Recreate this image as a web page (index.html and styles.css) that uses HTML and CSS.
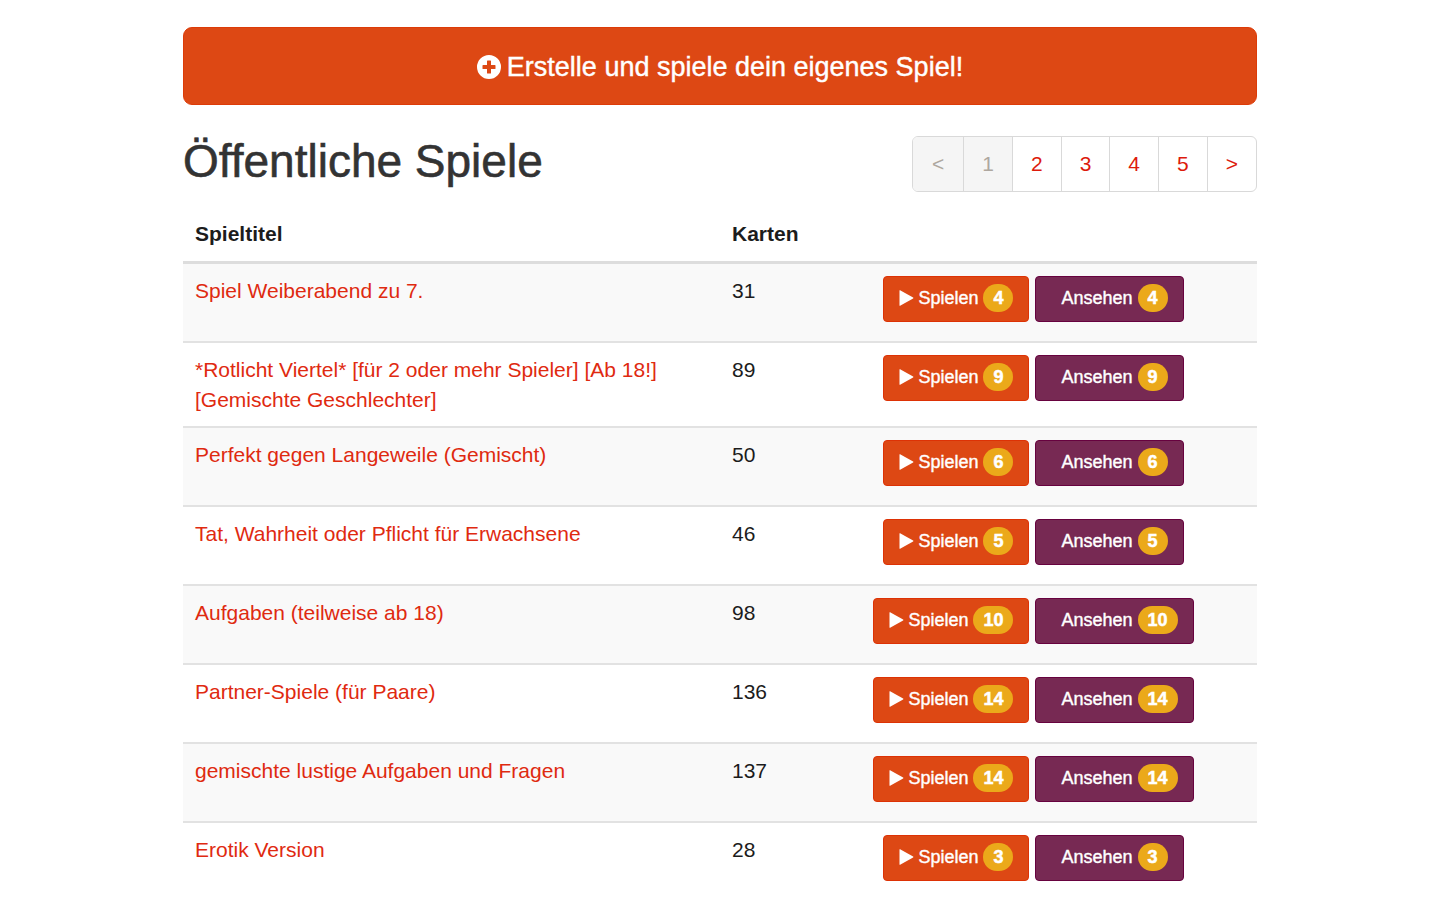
FILE: index.html
```
<!DOCTYPE html>
<html lang="de">
<head>
<meta charset="utf-8">
<meta name="viewport" content="width=device-width, initial-scale=1">
<title>Öffentliche Spiele</title>
<link rel="stylesheet" href="styles.css">
</head>
<body>
<main class="container">
  <button type="button" class="create"><svg class="create-icon" viewBox="0 0 24 24" aria-hidden="true"><path fill="currentColor" fill-rule="evenodd" d="M12 0a12 12 0 1 0 0 24a12 12 0 1 0 0-24zM10.6 5.500h2.800q.6 0 .6.6V10h3.900q.6 0 .6.6v2.800q0 .6-.6.6H14v3.900q0 .6-.6.6h-2.800q-.6 0-.6-.6V14H6.100q-.6 0-.6-.6v-2.800q0-.6.6-.6H10V6.100q0-.6.6-.6z"/></svg>Erstelle und spiele dein eigenes Spiel!</button>
  <header class="heading">
    <h1 class="title">Öffentliche Spiele</h1>
    <nav aria-label="Seiten">
      <ul class="pagination">
        <li class="page disabled"><span class="page-link">&lt;</span></li>
        <li class="page disabled"><span class="page-link" aria-current="page">1</span></li>
        <li class="page"><a class="page-link" href="#2">2</a></li>
        <li class="page"><a class="page-link" href="#3">3</a></li>
        <li class="page"><a class="page-link" href="#4">4</a></li>
        <li class="page"><a class="page-link" href="#5">5</a></li>
        <li class="page"><a class="page-link" href="#next">&gt;</a></li>
      </ul>
    </nav>
  </header>
  <table class="games">
    <thead>
      <tr><th class="col-title" scope="col">Spieltitel</th><th class="col-cards" scope="col">Karten</th><td class="col-actions"></td></tr>
    </thead>
    <tbody id="games"></tbody>
  </table>
</main>
<template id="row">
  <tr>
    <td><a class="game-link" href="#spiel"></a></td>
    <td class="cards"></td>
    <td>
      <div class="actions">
        <button type="button" class="btn play"><svg class="play-icon" viewBox="0 0 14 16" aria-hidden="true"><path fill="currentColor" d="M0 .6Q0 0 .6.300L13.600 7.500Q14.300 8 13.600 8.500L.6 15.700Q0 16 0 15.400z"/></svg><span class="label">Spielen</span><span class="badge"></span></button>
        <button type="button" class="btn view"><span class="label">Ansehen</span><span class="badge"></span></button>
      </div>
    </td>
  </tr>
</template>
<script src="games.js"></script>
</body>
</html>
```
FILE: styles.css
```
* { box-sizing: border-box; }

body {
  margin: 0;
  background: #fff;
  color: #1c1c1c;
  font: 21px/30px "Liberation Sans", Arial, sans-serif;
}

.container {
  width: 100%;
  max-width: 1074px;
  margin: 0 auto;
  padding-top: 27px;
}

.create {
  display: flex;
  align-items: center;
  justify-content: center;
  gap: 6px;
  width: 100%;
  padding: 22px 20px 20px;
  border: 1px solid #dd3b08;
  border-radius: 9px;
  background: #dd4814;
  color: #fff;
  font: 27px/34px "Liberation Sans", Arial, sans-serif;
  -webkit-text-stroke: 0.4px currentColor;
}
.create-icon { width: 24px; height: 24px; }

.heading {
  display: flex;
  justify-content: space-between;
  align-items: flex-start;
  padding: 31px 0 15px;
}
.title {
  margin: 0;
  color: #333;
  font-size: 46px;
  font-weight: 400;
  line-height: 50px;
  -webkit-text-stroke: 0.6px currentColor;
}

.pagination {
  display: flex;
  margin: 0;
  padding: 0;
  list-style: none;
  border: 1px solid #d9d9d9;
  border-radius: 6px;
  overflow: hidden;
}
.page + .page { border-left: 1px solid #d9d9d9; }
.page-link {
  display: block;
  padding: 12px 18px;
  color: #dd1a0c;
  text-decoration: none;
}
.page:first-child .page-link { padding: 12px 19px; }
.disabled .page-link { background: #f5f5f5; color: #aea79f; }

.games {
  width: 100%;
  table-layout: fixed;
  border-collapse: separate;
  border-spacing: 0;
}
.games th, .games td {
  padding: 12px 12px 11px;
  text-align: left;
  vertical-align: top;
}
.games thead th, .games thead td {
  padding-bottom: 12px;
  border-bottom: 3px solid #dddddd;
}
.col-title { width: 50%; }
.col-cards { width: 90px; }
.games tbody tr:nth-child(odd) { background: #f9f9f9; }
.games tbody tr + tr td { border-top: 2px solid #e2e2e2; }

.game-link { color: #df2a10; text-decoration: none; }

.actions {
  display: flex;
  justify-content: center;
  gap: 6px;
  padding-bottom: 8px;
}
.btn {
  display: flex;
  align-items: center;
  padding: 7px 15px 9px;
  border: 1px solid;
  border-radius: 4px;
  color: #fff;
  font: 18px/28px "Liberation Sans", Arial, sans-serif;
}
.label { -webkit-text-stroke: 0.4px currentColor; }
.play { border-color: #dd3205; background: #dd4814; }
.view { padding-left: 25px; border-color: #67023f; background: #772953; }
.play-icon { width: 15px; height: 16px; margin-right: 4px; }
.badge {
  margin-left: 5px;
  padding: 0 10px;
  border-radius: 14px;
  background: #eba91a;
  font-weight: 700;
  -webkit-text-stroke: 0.5px currentColor;
}
```
FILE: games.js
```
const games = [
  ["Spiel Weiberabend zu 7.", 31, 4],
  ["*Rotlicht Viertel* [für 2 oder mehr Spieler] [Ab 18!] [Gemischte Geschlechter]", 89, 9],
  ["Perfekt gegen Langeweile (Gemischt)", 50, 6],
  ["Tat, Wahrheit oder Pflicht für Erwachsene", 46, 5],
  ["Aufgaben (teilweise ab 18)", 98, 10],
  ["Partner-Spiele (für Paare)", 136, 14],
  ["gemischte lustige Aufgaben und Fragen", 137, 14],
  ["Erotik Version", 28, 3]
];

const template = document.getElementById("row");
const body = document.getElementById("games");

for (const [title, cards, count] of games) {
  const row = template.content.cloneNode(true);
  row.querySelector(".game-link").textContent = title;
  row.querySelector(".cards").textContent = cards;
  row.querySelectorAll(".badge").forEach((badge) => { badge.textContent = count; });
  body.append(row);
}
```
